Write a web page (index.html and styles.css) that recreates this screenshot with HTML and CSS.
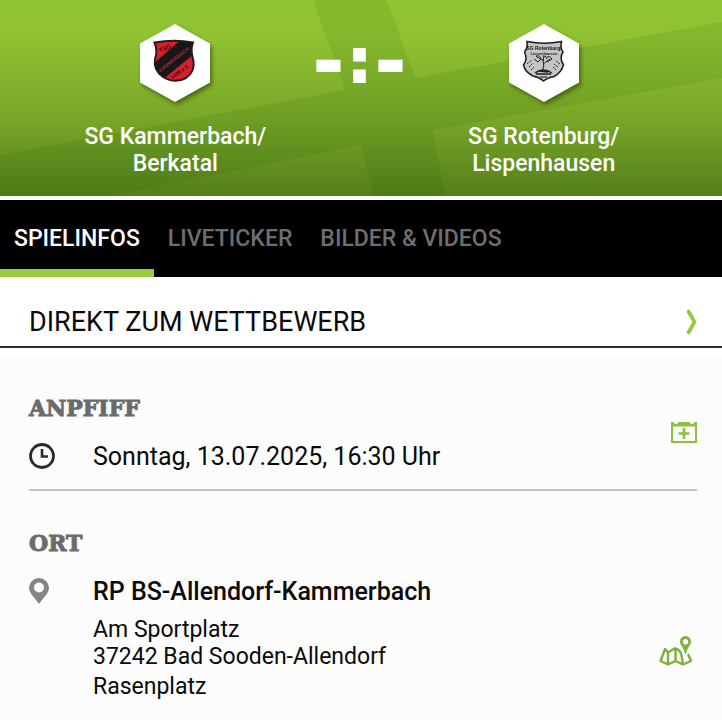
FILE: index.html
```html
<!DOCTYPE html>
<html lang="de">
<head>
  <meta charset="UTF-8">
  <meta name="viewport" content="width=device-width, initial-scale=1">
  <title>SG Kammerbach/Berkatal - SG Rotenburg/Lispenhausen</title>
  <link rel="stylesheet" href="styles.css">
</head>
<body>
  <header class="stage">
    <svg class="stage-pattern" viewBox="0 0 722 196" preserveAspectRatio="none" aria-hidden="true">
      <path d="M313 0H387L415 78L722 22V78L433 130L445 196H373L361 145L110 196H0V155L345 90Z" fill="#1e5a00" fill-opacity=".1"/>
    </svg>
    <div class="team">
      <svg class="emblem" viewBox="0 0 72 80" role="img" aria-label="Wappen SG Kammerbach/Berkatal">
        <path d="M36 1L71 20.500V59.500L36 79L1 59.500V20.500Z" fill="#fff"/>
        <clipPath id="shieldRed"><path d="M15.500 19.500Q35 16 54 19.500Q51 27 54.500 38Q56 49 47 55Q36 61 24 54Q14 47 16 36Q19 28 15.500 19.500Z"/></clipPath>
        <g clip-path="url(#shieldRed)">
          <path d="M12 14H58V62H12Z" fill="#d6202a"/>
          <path d="M12 43L45 14H60V27L22 58L12 54Z" fill="#17171a"/>
        </g>
        <path d="M15.500 19.500Q35 16 54 19.500Q51 27 54.500 38Q56 49 47 55Q36 61 24 54Q14 47 16 36Q19 28 15.500 19.500Z" fill="none" stroke="#2a1a20" stroke-width="2"/>
        <text x="27" y="27" class="emblem-text" fill="#3a0508" font-size="6" transform="rotate(-24 27 27)" text-anchor="middle">TSG</text>
        <text x="36" y="38" class="emblem-text" fill="#c02a35" font-size="5" transform="rotate(-38 36 38)" text-anchor="middle">KAMMERBACH</text>
        <text x="42" y="50" class="emblem-text" fill="#3a0508" font-size="5" transform="rotate(-36 42 50)" text-anchor="middle">1909 e.V.</text>
      </svg>
      <h2 class="team-name">SG Kammerbach/<br>Berkatal</h2>
    </div>
    <div class="score"><span>-</span><span class="colon">:</span><span>-</span></div>
    <div class="team">
      <svg class="emblem" viewBox="0 0 72 80" role="img" aria-label="Wappen SG Rotenburg/Lispenhausen">
        <path d="M36 1L71 20.500V59.500L36 79L1 59.500V20.500Z" fill="#fff"/>
        <path d="M19 18.500Q36 22 53.500 18.500Q52 25 55 29Q51 35 55.500 42Q53 50 46 53.500Q39 55 35.500 58Q31 54 25 53Q17 49 15.500 42Q20 36 16.500 29Q20 25 19 18.500Z" fill="#c4c4c6" stroke="#1c1c1e" stroke-width="1.500"/>
        <text x="36" y="27" class="emblem-text" fill="#111" font-size="5" text-anchor="middle">SG Rotenburg/</text>
        <text x="36" y="32" class="emblem-text" fill="#222" font-size="4" text-anchor="middle">Lispenhausen</text>
        <g fill="none" stroke="#222" stroke-width="1">
          <path d="M34 49Q37 43 35 37L29 34M35 41L42 36M35 38L36 33M28 34Q30 31 33 35M26 36L30 39L33 36M39 34Q42 32 44 36L39 39M35 33Q38 32 39 36"/>
          <path d="M27 50Q35 44 44 50M28 51H43M31 48L40 49" stroke-width="1.500"/>
          <path d="M19 41L24 37M21 44L25 40M23 47L26 44M52 41L48 38M50 44L46 41M48 47L45 44" stroke-dasharray="2 1"/>
          <path d="M32 54H39"/>
        </g>
      </svg>
      <h2 class="team-name">SG Rotenburg/<br>Lispenhausen</h2>
    </div>
  </header>

  <nav class="tabs">
    <a class="tab active" href="#spielinfos">SPIELINFOS</a>
    <a class="tab" href="#liveticker">LIVETICKER</a>
    <a class="tab" href="#medien">BILDER &amp; VIDEOS</a>
  </nav>

  <a class="competition" href="#wettbewerb">
    <span>DIREKT ZUM WETTBEWERB</span>
    <svg class="chevron" width="11" height="26" viewBox="0 0 11 26" aria-hidden="true"><path d="M2.500 2.500L8.500 13L2.500 23.500" fill="none" stroke="#95c93d" stroke-width="3.600" stroke-linecap="round"/></svg>
  </a>

  <main class="infos" id="spielinfos">
    <section class="info kickoff">
      <div>
        <h3>ANPFIFF</h3>
        <div class="entry">
          <svg width="26" height="26" viewBox="0 0 26 26" aria-hidden="true"><circle cx="13" cy="13" r="11.500" fill="none" stroke="#2b2b2b" stroke-width="2.800"/><path d="M13 6V13.500H19" fill="none" stroke="#2b2b2b" stroke-width="2.600"/></svg>
          <p class="date">Sonntag, 13.07.2025, 16:30 Uhr</p>
        </div>
      </div>
      <button class="action" type="button" aria-label="Zum Kalender hinzufügen">
        <svg width="26" height="22" viewBox="0 0 26 22"><path d="M1 1V21H25V1" fill="none" stroke="#8fbf3f" stroke-width="2"/><path d="M0 1H2.500Q3 3 5 3Q7 3 7.500 1H18.500Q19 3 21 3Q23 3 23.500 1H26V5.500H0Z" fill="#8fbf3f"/><path d="M13 7V18M7.500 12.500H18.500" stroke="#8fbf3f" stroke-width="2.600"/></svg>
      </button>
    </section>

    <section class="info">
      <div>
        <h3>ORT</h3>
        <div class="entry">
          <svg width="20" height="26" viewBox="0 0 20 26" aria-hidden="true"><path d="M10 0A10 10 0 0 0 0 10C0 15 6 20 10 26C14 20 20 15 20 10A10 10 0 0 0 10 0ZM10 4.500A5 5 0 1 1 10 14.500A5 5 0 1 1 10 4.500Z" fill="#858585" fill-rule="evenodd"/></svg>
          <div class="place">
            <h4>RP BS-Allendorf-Kammerbach</h4>
            <p class="address">Am Sportplatz<br>37242 Bad Sooden-Allendorf</p>
            <p class="address">Rasenplatz</p>
          </div>
        </div>
      </div>
      <button class="action map" type="button" aria-label="Karte anzeigen">
        <svg width="34" height="30" viewBox="0 0 34 30"><path d="M22 17Q19 12.500 15.500 12.500L9 16.500L6 13L1.500 25L9 28.500L16.500 25L24 28.500L32 25L29 18M9 16.500V28M16.500 13V25M22 17L24 28" fill="none" stroke="#7fb13d" stroke-width="2.400" stroke-linejoin="round"/><path d="M26.500 0A5.500 5.500 0 0 0 21 5.500C21 10 25 11 26 18H27C28 11 32 10 32 5.500A5.500 5.500 0 0 0 26.500 0ZM26.500 3A2.700 2.700 0 1 1 26.500 8.400A2.700 2.700 0 1 1 26.500 3Z" fill="#7fb13d" fill-rule="evenodd"/></svg>
      </button>
    </section>
  </main>
</body>
</html>
```
FILE: styles.css
```css
* {
    box-sizing: border-box;
}

body {
    margin: 0;
    background-color: #fcfcfc;
    color: #0a0a0a;
    font-family: Roboto, "Liberation Sans", sans-serif;
}

h2,
h3,
h4,
p {
    margin: 0;
}

a {
    text-decoration: none;
}

/* Match header */
.stage {
    position: relative;
    display: grid;
    grid-template-columns: 1fr auto 1fr;
    align-items: start;
    padding: 23px 40px 19px 37px;
    background: linear-gradient(#92c534 0%, #8fc132 20%, #79a729 60%, #547f1b 100%);
    border-bottom: 4px solid #ffffff;
    color: #ffffff;
}

.stage-pattern {
    position: absolute;
    inset: 0;
    width: 100%;
    height: 100%;
}

.team,
.score {
    position: relative;
}

.team {
    display: flex;
    flex-direction: column;
    align-items: center;
    gap: 20px;
}

.emblem {
    width: 72px;
    height: 80px;
    filter: drop-shadow(2px 3px 2px rgba(40, 60, 0, 0.6));
}

.emblem-text {
    font-family: "Liberation Sans Narrow", "Liberation Sans", sans-serif;
    font-weight: bold;
}

.team-name {
    font-size: 23px;
    line-height: 27px;
    font-weight: 500;
    text-align: center;
}

.score {
    display: flex;
    gap: 4px;
    font-family: "DejaVu Sans", sans-serif;
    font-size: 72px;
    line-height: 76px;
    font-weight: bold;
    -webkit-text-stroke: 2px #ffffff;
}

.colon {
    font-size: 60px;
}

/* Tabs */
.tabs {
    display: flex;
    background-color: #000000;
}

.tab {
    padding: 25px 14px 17px;
    border-bottom: 8px solid transparent;
    color: #6e6e6e;
    font-size: 23px;
    line-height: 27px;
    font-weight: 500;
    white-space: nowrap;
}

.tab.active {
    border-bottom-color: #99cc3d;
    color: #ffffff;
}

.competition {
    display: flex;
    justify-content: space-between;
    align-items: center;
    padding: 29px 25px 8px 29px;
    background-color: #ffffff;
    border-bottom: 2px solid #2b2b2b;
    color: #0a0a0a;
    font-size: 27px;
    line-height: 32px;
}

/* Match details */
.infos {
    padding: 0 25px 0 29px;
    border-top: 8px solid #ffffff;
}

.info {
    display: flex;
    justify-content: space-between;
    align-items: center;
    padding: 36px 0 18px;
}

.kickoff {
    border-bottom: 2px solid #c6c6c6;
}

.info h3 {
    color: #6b6b6b;
    font-family: "DejaVu Serif", serif;
    font-size: 22px;
    line-height: 32px;
    font-weight: bold;
    -webkit-text-stroke: 1px #6b6b6b;
}

.entry {
    display: grid;
    grid-template-columns: 64px 1fr;
    margin-top: 19px;
}

.date,
.place h4 {
    font-size: 25px;
    line-height: 28px;
}

.place h4 {
    margin-bottom: 10px;
    font-weight: 500;
}

.address {
    font-size: 23px;
    line-height: 27px;
}

.address + .address {
    margin-top: 3px;
}

.action {
    display: flex;
    padding: 0;
    border: 0;
    background: none;
    cursor: pointer;
}

.map {
    margin: 74px 4px 0 0;
}
```
